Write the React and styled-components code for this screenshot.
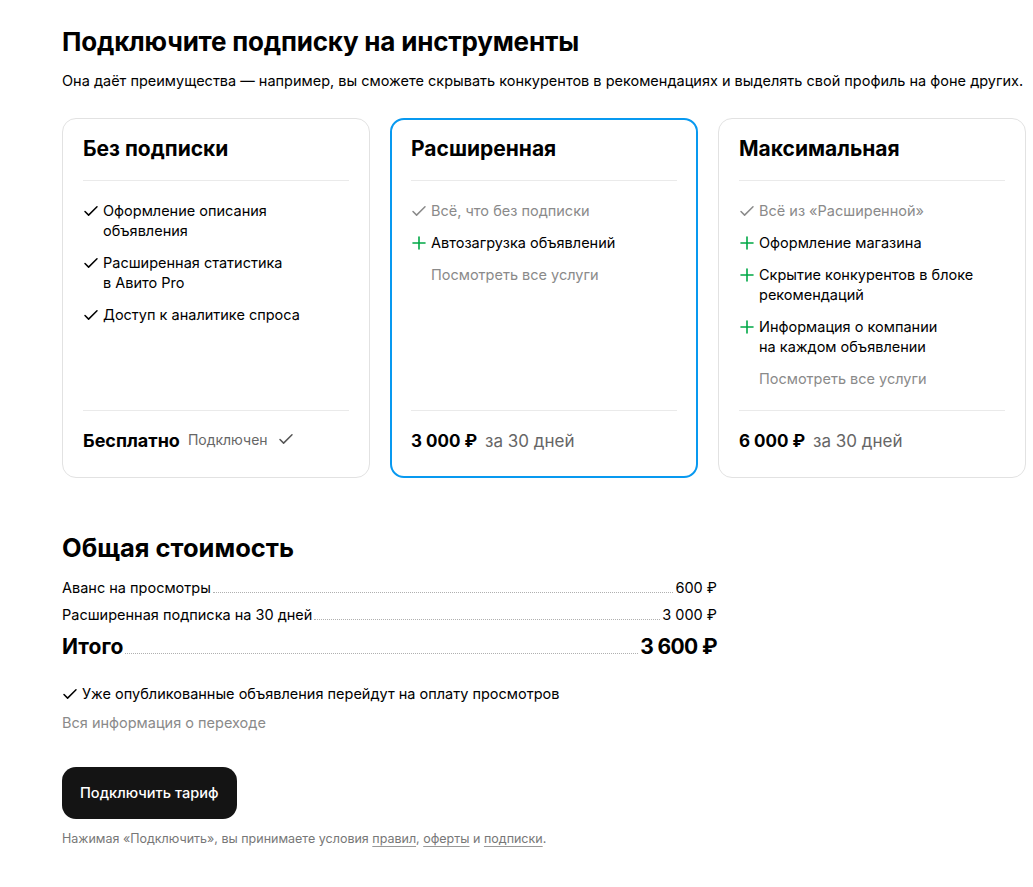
import React from 'react';
import styled, { createGlobalStyle } from 'styled-components';

const GlobalStyle = createGlobalStyle`
  * { box-sizing: border-box; }
  body {
    margin: 0;
    background: #fff;
    color: #000;
    font-family: Inter, "Noto Sans", sans-serif;
  }
`;

const Check = ({ color = '#000' }) => (
  <svg width="16" height="16" viewBox="0 0 16 16" fill="none">
    <path d="M2 8.5l3.6 3.6L14 3.8" stroke={color} strokeWidth="1.5" strokeLinecap="round" strokeLinejoin="round" />
  </svg>
);

const Plus = () => (
  <svg width="16" height="16" viewBox="0 0 16 16" fill="none">
    <path d="M8 2v12M2 8h12" stroke="#00a846" strokeWidth="1.6" strokeLinecap="round" />
  </svg>
);

const plans = [
  {
    title: 'Без подписки',
    items: [
      { icon: 'check', text: ['Оформление описания', 'объявления'] },
      { icon: 'check', text: ['Расширенная статистика', 'в Авито Pro'] },
      { icon: 'check', text: ['Доступ к аналитике спроса'] },
    ],
    free: true,
  },
  {
    title: 'Расширенная',
    active: true,
    items: [
      { icon: 'check', muted: true, text: ['Всё, что без подписки'] },
      { icon: 'plus', text: ['Автозагрузка объявлений'] },
      { link: true, text: ['Посмотреть все услуги'] },
    ],
    price: '3 000 ₽',
  },
  {
    title: 'Максимальная',
    items: [
      { icon: 'check', muted: true, text: ['Всё из «Расширенной»'] },
      { icon: 'plus', text: ['Оформление магазина'] },
      { icon: 'plus', text: ['Скрытие конкурентов в блоке', 'рекомендаций'] },
      { icon: 'plus', text: ['Информация о компании', 'на каждом объявлении'] },
      { link: true, text: ['Посмотреть все услуги'] },
    ],
    price: '6 000 ₽',
  },
];

const rows = [
  { label: 'Аванс на просмотры', value: '600 ₽' },
  { label: 'Расширенная подписка на 30 дней', value: '3 000 ₽' },
];

export default function App() {
  return (
    <Page>
      <GlobalStyle />
      <H1>Подключите подписку на инструменты</H1>
      <Lead>
        Она даёт преимущества — например, вы сможете скрывать конкурентов в рекомендациях и выделять свой профиль на фоне других.
      </Lead>

      <Cards>
        {plans.map((p) => (
          <Card key={p.title} $active={p.active}>
            <CardTitle>{p.title}</CardTitle>
            <List>
              {p.items.map((it, i) => (
                <Item key={i} $muted={it.muted || it.link}>
                  <IconBox>
                    {it.icon === 'check' && <Check color={it.muted ? '#8a8a8a' : '#000'} />}
                    {it.icon === 'plus' && <Plus />}
                  </IconBox>
                  <span>
                    {it.text.map((t, j) => (
                      <React.Fragment key={j}>
                        {j > 0 && <br />}
                        {t}
                      </React.Fragment>
                    ))}
                  </span>
                </Item>
              ))}
            </List>
            <CardFooter>
              {p.free ? (
                <>
                  <Price $wide>Бесплатно</Price>
                  <Connected>
                    Подключен
                    <Check color="#555" />
                  </Connected>
                </>
              ) : (
                <>
                  <Price>{p.price}</Price>
                  <Period>за 30 дней</Period>
                </>
              )}
            </CardFooter>
          </Card>
        ))}
      </Cards>

      <Summary>
        <H2>Общая стоимость</H2>
        {rows.map((r) => (
          <Row key={r.label}>
            <span>{r.label}</span>
            <Leader />
            <span>{r.value}</span>
          </Row>
        ))}
        <Row $total>
          <span>Итого</span>
          <Leader />
          <TotalValue>3 600 ₽</TotalValue>
        </Row>
      </Summary>

      <Note>
        <Check />
        Уже опубликованные объявления перейдут на оплату просмотров
      </Note>
      <MutedLine>Вся информация о переходе</MutedLine>

      <Button>Подключить тариф</Button>

      <Terms>
        Нажимая «Подключить», вы принимаете условия <u>правил</u>, <u>оферты</u> и <u>подписки</u>.
      </Terms>
    </Page>
  );
}

const Page = styled.div`
  padding: 26px 8px 40px 62px;
  display: flex;
  flex-direction: column;
  align-items: flex-start;
`;

const H1 = styled.h1`
  margin: 0;
  font-size: 26px;
  line-height: 32px;
  font-weight: 700;
  letter-spacing: -0.2px;
`;

const Lead = styled.p`
  margin: 13px 0 0;
  font-size: 14.5px;
  line-height: 20px;
  white-space: nowrap;
`;

const Cards = styled.div`
  margin-top: 27px;
  display: grid;
  grid-template-columns: repeat(3, 308px);
  gap: 20px;
`;

const Card = styled.div`
  display: flex;
  flex-direction: column;
  border: ${(p) => (p.$active ? '2px solid #0899f0' : '1px solid #e2e2e2')};
  border-radius: 14px;
  padding: ${(p) => (p.$active ? '19px 19px 23px' : '20px 20px 24px')};
`;

const CardTitle = styled.div`
  font-size: 21px;
  line-height: 20px;
  font-weight: 700;
  padding-bottom: 21px;
  border-bottom: 1px solid #eaeaea;
`;

const List = styled.div`
  display: flex;
  flex-direction: column;
  gap: 12px;
  padding: 20px 0 21px;
`;

const Item = styled.div`
  display: flex;
  gap: 4px;
  font-size: 14.5px;
  line-height: 20px;
  color: ${(p) => (p.$muted ? '#8a8a8a' : '#000')};
`;

const IconBox = styled.span`
  width: 16px;
  flex: 0 0 16px;
  height: 20px;
  display: flex;
  align-items: center;
`;

const CardFooter = styled.div`
  margin-top: auto;
  border-top: 1px solid #eaeaea;
  padding-top: 18px;
  display: flex;
  align-items: center;
  gap: 8px;
`;

const Price = styled.span`
  font-size: ${(p) => (p.$wide ? '18px' : '17px')};
  line-height: 24px;
  font-weight: 700;
`;

const Period = styled.span`
  font-size: 17px;
  line-height: 24px;
  color: #666;
`;

const Connected = styled.span`
  display: flex;
  align-items: center;
  gap: 10px;
  font-size: 14px;
  color: #666;
  margin-top: -4px;
`;

const Summary = styled.div`
  margin-top: 54px;
  width: 655px;
  display: flex;
  flex-direction: column;
`;

const H2 = styled.h2`
  margin: 0 0 7px;
  font-size: 25.5px;
  line-height: 32px;
  font-weight: 700;
`;

const Row = styled.div`
  display: flex;
  align-items: baseline;
  font-size: ${(p) => (p.$total ? '21px' : '14.5px')};
  font-weight: ${(p) => (p.$total ? 700 : 400)};
  line-height: ${(p) => (p.$total ? '28px' : '20px')};
  margin-top: ${(p) => (p.$total ? '8px' : '7px')};
`;

const TotalValue = styled.span`
  letter-spacing: -0.6px;
`;

const Leader = styled.span`
  flex: 1;
  margin: 0 2px;
  border-bottom: 1px dotted #b0b0b0;
`;

const Note = styled.div`
  margin-top: 23px;
  display: flex;
  align-items: center;
  gap: 4px;
  font-size: 14.5px;
  line-height: 20px;
`;

const MutedLine = styled.div`
  margin-top: 9px;
  font-size: 14.5px;
  line-height: 20px;
  color: #8a8a8a;
`;

const Button = styled.button`
  margin-top: 34px;
  height: 52px;
  padding: 0 18px;
  border: none;
  border-radius: 14px;
  background: #141414;
  color: #fff;
  font-family: inherit;
  font-size: 14.6px;
  font-weight: 500;
`;

const Terms = styled.div`
  margin-top: 11px;
  font-size: 12.5px;
  line-height: 18px;
  color: #777;
  u {
    text-decoration-color: #999;
    text-underline-offset: 3px;
  }
`;
